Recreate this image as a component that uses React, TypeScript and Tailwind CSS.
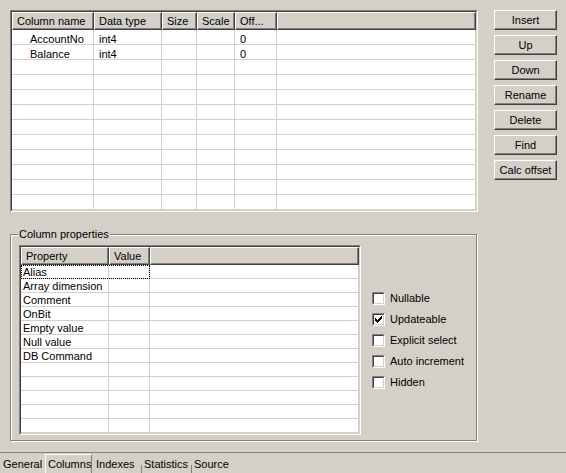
import { ReactNode } from "react";

const font = "font-['Liberation_Sans',Arial,sans-serif] text-[11px] text-black";

type Col = { title: string; w: string; body: string };

const topCols: Col[] = [
    { title: "Column name", w: "w-[82px]", body: "pl-[18px] pt-[4px]" },
    { title: "Data type", w: "w-[68px]", body: "pl-[5px] pt-[4px]" },
    { title: "Size", w: "w-[35px]", body: "pl-[5px] pt-[4px]" },
    { title: "Scale", w: "w-[38px]", body: "pl-[5px] pt-[4px]" },
    { title: "Off...", w: "w-[42px]", body: "pl-[5px] pt-[4px]" },
];

const topRows = [
    ["AccountNo", "int4", "", "", "0"],
    ["Balance", "int4", "", "", "0"],
];

const propCols: Col[] = [
    { title: "Property", w: "w-[88px]", body: "pl-[2px] pt-[2px]" },
    { title: "Value", w: "w-[41px]", body: "pl-[2px]" },
];

const props = ["Alias", "Array dimension", "Comment", "OnBit", "Empty value", "Null value", "DB Command"];

const buttons = ["Insert", "Up", "Down", "Rename", "Delete", "Find", "Calc offset"];

const checks = [
    { label: "Nullable", on: false },
    { label: "Updateable", on: true },
    { label: "Explicit select", on: false },
    { label: "Auto increment", on: false },
    { label: "Hidden", on: false },
];

// sunken 3d frame used by list views and check boxes
const Sunken = ({ className, children }: { className: string; children: ReactNode }) => (
    <div className={`flex border border-t-[#808080] border-l-[#808080] border-r-white border-b-white ${className}`}>
        <div className="flex flex-1 flex-col overflow-hidden border border-t-[#404040] border-l-[#404040] border-r-[#d4d0c8] border-b-[#d4d0c8] bg-white">
            {children}
        </div>
    </div>
);

const HeaderCell = ({ w, children }: { w: string; children?: ReactNode }) => (
    <div
        className={`${w} flex h-full shrink-0 items-center overflow-hidden whitespace-nowrap border border-t-white border-l-white border-r-[#404040] border-b-[#404040] bg-[#d4d0c8] pl-[4px] shadow-[inset_-1px_-1px_0_#808080]`}
    >
        {children}
    </div>
);

const Cell = ({ w, className, children }: { w: string; className?: string; children?: ReactNode }) => (
    <div
        className={`${w} flex h-full shrink-0 items-center overflow-hidden whitespace-nowrap border-r border-b border-[#d4d0c8] ${className ?? ""}`}
    >
        {children}
    </div>
);

const Button = ({ label }: { label: string }) => (
    <div className="flex h-[20px] w-[63px] items-center justify-center border border-t-white border-l-white border-r-[#404040] border-b-[#404040] bg-[#d4d0c8] pt-[1px] shadow-[inset_-1px_-1px_0_#808080]">
        {label}
    </div>
);

const Check = ({ label, on }: { label: string; on: boolean }) => (
    <div className="flex h-[13px] items-center gap-[5px]">
        <Sunken className="h-[13px] w-[13px]">
            {on && (
                <svg width="9" height="9" viewBox="0 0 9 9">
                    <path d="M1 3h1v1h1v1h1V4h1V3h1V2h1V1h1v3h-1v1h-1v1h-1v1h-1v1H3V7H2V6H1z" fill="#000" />
                </svg>
            )}
        </Sunken>
        <span className="pt-[1px]">{label}</span>
    </div>
);

export default function App() {
    return (
        <div className={`flex h-[473px] w-[566px] flex-col bg-[#d4d0c8] ${font}`}>
            {/* Columns list + buttons */}
            <div className="flex pt-[10px] pl-[10px]">
                <Sunken className="h-[202px] w-[468px]">
                    <div className="flex h-[18px] shrink-0">
                        {topCols.map((c) => (
                            <HeaderCell key={c.title} w={c.w}>
                                {c.title}
                            </HeaderCell>
                        ))}
                        <HeaderCell w="flex-1" />
                    </div>
                    {Array.from({ length: 12 }).map((_, r) => (
                        <div key={r} className="flex h-[15px] shrink-0">
                            {topCols.map((c, i) => (
                                <Cell key={i} w={c.w} className={c.body}>
                                    {topRows[r]?.[i]}
                                </Cell>
                            ))}
                            <Cell w="flex-1" />
                        </div>
                    ))}
                </Sunken>
                <div className="ml-[16px] flex flex-col gap-[5px]">
                    {buttons.map((b) => (
                        <Button key={b} label={b} />
                    ))}
                </div>
            </div>

            {/* Column properties group */}
            <div className="relative mt-[22px] ml-[10px] flex h-[207px] w-[467px] items-start border border-[#808080] pt-[10px] pl-[8px] shadow-[inset_1px_1px_0_#fff,1px_1px_0_#fff]">
                <span className="absolute -top-[7px] left-[7px] bg-[#d4d0c8] px-[1px] leading-[13px]">
                    Column properties
                </span>
                <Sunken className="h-[190px] w-[342px]">
                    <div className="flex h-[18px] shrink-0">
                        {propCols.map((c) => (
                            <HeaderCell key={c.title} w={c.w}>
                                {c.title}
                            </HeaderCell>
                        ))}
                        <HeaderCell w="flex-1" />
                    </div>
                    {Array.from({ length: 12 }).map((_, r) => (
                        <div key={r} className="flex h-[14px] shrink-0">
                            <div
                                className={`flex h-full ${r === 0 ? "outline-1 -outline-offset-1 outline-dotted outline-black" : ""}`}
                            >
                                <Cell w={propCols[0].w} className={propCols[0].body}>
                                    {props[r]}
                                </Cell>
                                <Cell w={propCols[1].w} />
                            </div>
                            <Cell w="flex-1" />
                        </div>
                    ))}
                </Sunken>
                <div className="ml-[11px] flex h-[190px] flex-col justify-center gap-[8px]">
                    {checks.map((c) => (
                        <Check key={c.label} label={c.label} on={c.on} />
                    ))}
                </div>
            </div>

            {/* Tab set */}
            <div className="mt-auto flex h-[21px] border-t border-[#808080] pt-[1px]">
                <div className="flex w-[45px] items-center pl-[3px] pt-[1px]">General</div>
                <div className="flex w-[47px] items-center border-t border-l border-r border-t-white border-l-white border-r-[#808080] pl-[2px]">
                    Columns
                </div>
                <div className="flex w-[49px] items-center pl-[4px] pt-[1px]">Indexes</div>
                <div className="mt-auto h-[8px] w-px bg-[#808080]" />
                <div className="flex w-[49px] items-center pl-[2px] pt-[1px]">Statistics</div>
                <div className="mt-auto h-[8px] w-px bg-[#808080]" />
                <div className="flex items-center pl-[2px] pt-[1px]">Source</div>
            </div>
        </div>
    );
}
